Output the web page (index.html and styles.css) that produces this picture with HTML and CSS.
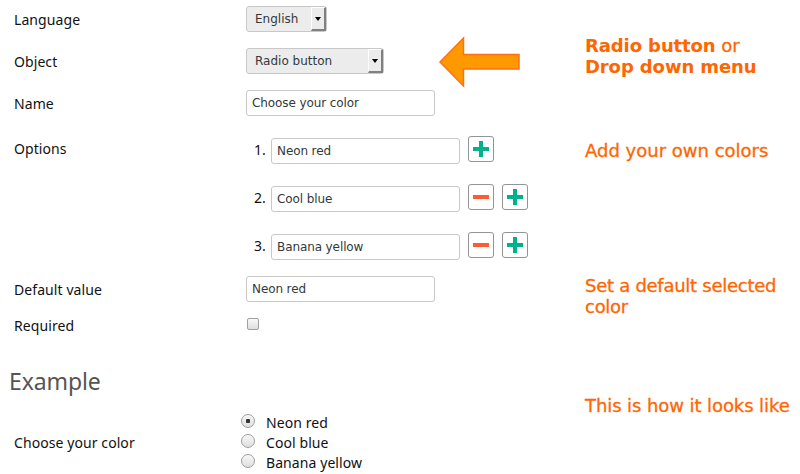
FILE: index.html
```html
<!DOCTYPE html>
<html lang="en">
<head>
    <meta charset="UTF-8">
    <meta name="viewport" content="width=device-width, initial-scale=1.0">
    <title>Edit form field</title>
    <link rel="stylesheet" href="styles.css">
</head>
<body>

<div class="page">
    <form class="field-form">
        <!-- Language -->
        <div class="row">
            <label class="name">Language</label>
            <div class="select language"><span>English</span><i class="drop"></i></div>
        </div>

        <!-- Object -->
        <div class="row">
            <label class="name">Object</label>
            <div class="select object"><span>Radio button</span><i class="drop"></i></div>
        </div>

        <!-- Name -->
        <div class="row">
            <label class="name" for="name">Name</label>
            <input type="text" id="name" value="Choose your color">
        </div>

        <!-- Options -->
        <div class="row options">
            <label class="name">Options</label>
            <div class="option-list">
                <div class="option">
                    <span class="number">1.</span>
                    <input type="text" value="Neon red">
                    <button type="button" class="add"><svg width="16" height="16"><path d="M6 0h4v6h6v4h-6v6H6v-6H0V6h6z"/></svg></button>
                </div>
                <div class="option">
                    <span class="number">2.</span>
                    <input type="text" value="Cool blue">
                    <button type="button" class="remove"><svg width="16" height="16"><path d="M0 6h16v4H0z"/></svg></button>
                    <button type="button" class="add"><svg width="16" height="16"><path d="M6 0h4v6h6v4h-6v6H6v-6H0V6h6z"/></svg></button>
                </div>
                <div class="option">
                    <span class="number">3.</span>
                    <input type="text" value="Banana yellow">
                    <button type="button" class="remove"><svg width="16" height="16"><path d="M0 6h16v4H0z"/></svg></button>
                    <button type="button" class="add"><svg width="16" height="16"><path d="M6 0h4v6h6v4h-6v6H6v-6H0V6h6z"/></svg></button>
                </div>
            </div>
        </div>

        <!-- Default value -->
        <div class="row default">
            <label class="name" for="default">Default value</label>
            <input type="text" id="default" value="Neon red">
        </div>

        <!-- Required -->
        <div class="row required">
            <label class="name" for="required">Required</label>
            <input type="checkbox" id="required">
        </div>

        <h2>Example</h2>
        <div class="row example">
            <label class="name">Choose your color</label>
            <div class="radios">
                <label><input type="radio" name="color" checked>Neon red</label>
                <label><input type="radio" name="color">Cool blue</label>
                <label><input type="radio" name="color">Banana yellow</label>
            </div>
        </div>
    </form>

    <svg class="arrow" width="82" height="52" viewBox="0 0 82 52">
        <path d="M1 26L24.500 2V18.500H80V33H24.500V50z"/>
    </svg>

    <div class="notes">
        <p class="note-object"><b>Radio button</b> or<br><b>Drop down menu</b></p>
        <p class="note-options">Add your own colors</p>
        <p class="note-default">Set a default selected<br>color</p>
        <p class="note-example">This is how it looks like</p>
    </div>
</div>

</body>
</html>
```

FILE: styles.css
```css
body {
    margin: 0;
    background-color: #fff;
    color: #111;
    font-family: "Noto Sans", sans-serif;
    font-size: 14px;
    line-height: 20px;
    letter-spacing: 0.08px;
    overflow: hidden;
}
.page {
    display: flex;
    align-items: flex-start;
    width: 800px;
    height: 474px;
}
.field-form {
    width: 439px;
    flex: none;
    padding-top: 6px;
}
.row {
    display: flex;
    align-items: center;
    height: 26px;
    margin-bottom: 16px;
    padding-left: 14px;
}
.name {
    box-sizing: border-box;
    width: 232px;
    flex: none;
    padding-top: 2px;
}
input[type="text"], .select {
    box-sizing: border-box;
    width: 189px;
    height: 26px;
    flex: none;
    margin: 0;
    padding: 0 5px;
    border: 1px solid #c8c8c8;
    border-radius: 3px;
    background-color: #fff;
    color: #33393b;
    font-family: "DejaVu Sans", sans-serif;
    font-size: 12px;
    letter-spacing: -0.1px;
}
.select {
    display: flex;
    align-items: center;
    justify-content: space-between;
    padding: 0 0 0 8px;
    background-color: #ececec;
    letter-spacing: 0;
}
.select.language {
    width: 81px;
}
.select.object {
    width: 138px;
}
.drop {
    box-sizing: border-box;
    display: flex;
    align-items: center;
    justify-content: center;
    width: 15px;
    height: 24px;
    border: 2px solid;
    border-color: #fff #808080 #808080 #fff;
    border-width: 1px 2px 2px 1px;
}
.drop::before {
    content: "";
    border: 3px solid transparent;
    border-top: 4px solid #000;
    border-bottom: 0;
}
.options {
    height: auto;
    align-items: flex-start;
    margin: 20px 0 18px;
}
.options .name {
    padding-top: 0;
    line-height: 26px;
}
.option {
    display: flex;
    height: 26px;
    margin-bottom: 22px;
}
.option:last-child {
    margin-bottom: 0;
}
.number {
    width: 17px;
    flex: none;
    padding-left: 8px;
    line-height: 28px;
}
.option input[type="text"] {
    margin-top: 2px;
}
button {
    box-sizing: border-box;
    display: flex;
    align-items: center;
    justify-content: center;
    width: 26px;
    height: 26px;
    flex: none;
    margin: 0 0 0 8px;
    padding: 0;
    border: 1px solid #949494;
    border-radius: 3px;
    background-color: #fff;
}
.add {
    fill: #00b18a;
}
.remove {
    fill: #ff5b35;
}
.default {
    margin-bottom: 11px;
}
input[type="checkbox"], input[type="radio"] {
    appearance: none;
    box-sizing: border-box;
    flex: none;
    margin: 0;
    border: 1px solid #a0a0a0;
    background-image: linear-gradient(#f8f8f8, #dedede);
}
input[type="checkbox"] {
    width: 12px;
    height: 12px;
    margin: -5px 0 0 1px;
    border-radius: 2px;
}
.required {
    margin-bottom: 26px;
}
.required .name {
    padding-top: 0;
}
h2 {
    margin: 0 0 16px 9px;
    color: #555;
    font-size: 23px;
    font-weight: normal;
    letter-spacing: -0.1px;
    line-height: 32px;
}
.example {
    height: 60px;
    margin: 0;
}
.example .name {
    padding-top: 0;
}
.radios label {
    display: flex;
    height: 20px;
}
input[type="radio"] {
    width: 14px;
    height: 14px;
    margin: 1px 11px 0 -5px;
    border-radius: 50%;
}
input[type="radio"]:checked {
    background-image: radial-gradient(circle, #2e3436 0 2px, transparent 2.5px), linear-gradient(#f8f8f8, #dedede);
}
.arrow {
    flex: none;
    margin-top: 36px;
    fill: #f90;
    stroke: #ff6f1a;
    stroke-width: 1.5px;
}
.notes {
    flex: none;
    width: 215px;
    margin-left: 64px;
    padding-top: 35px;
    color: #f60;
    font-family: "DejaVu Sans", sans-serif;
    font-size: 18px;
    letter-spacing: 0;
    line-height: 21px;
    white-space: nowrap;
    -webkit-text-stroke: 0.3px #f60;
}
.notes p {
    margin: 0;
}
.notes b {
    letter-spacing: -0.1px;
    -webkit-text-stroke: 0;
}
.notes .note-options {
    margin-top: 63px;
}
.notes .note-default {
    margin-top: 114px;
    letter-spacing: -0.27px;
}
.notes .note-example {
    margin-top: 78px;
    letter-spacing: -0.08px;
}
```
